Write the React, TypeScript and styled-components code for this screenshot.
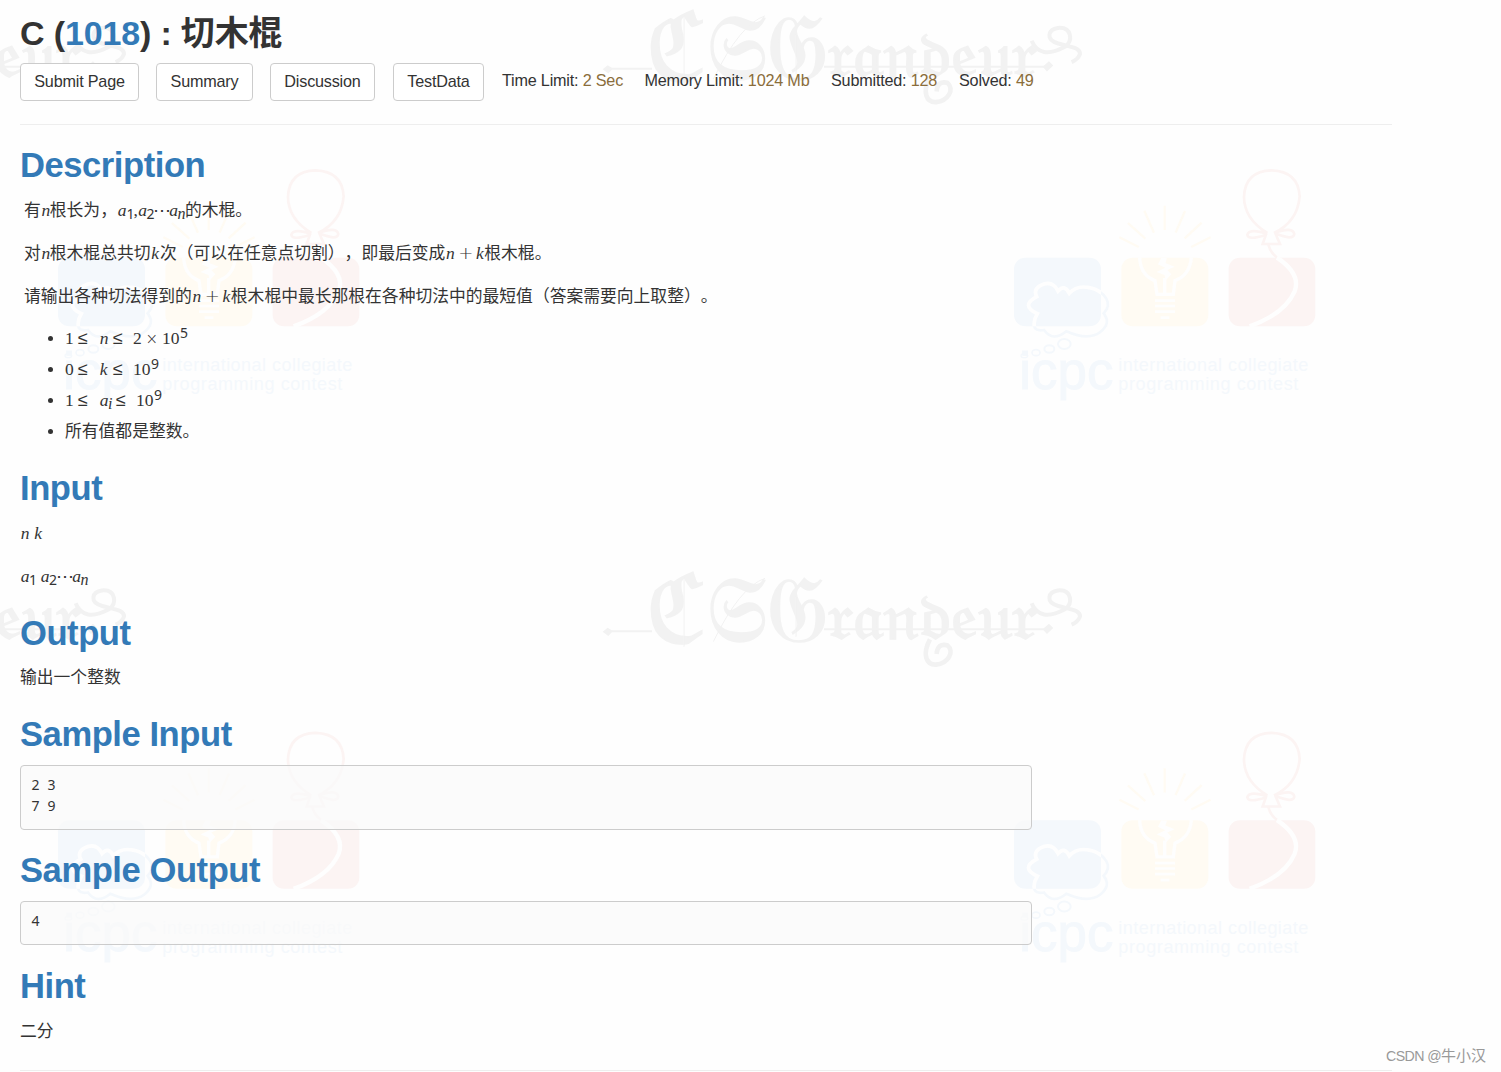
import { ReactNode } from "react";
import styled, { createGlobalStyle } from "styled-components";

const GlobalStyle = createGlobalStyle`
  * {
    box-sizing: border-box;
  }
  body {
    margin: 0;
    background-color: #fefefe;
    color: #333;
    font-family: "Liberation Sans", "Noto Sans CJK SC", sans-serif;
    font-size: 16.8px;
    text-spacing-trim: space-all;
  }
`;

const Page = styled.div`
  position: relative;
  width: 1501px;
  height: 1072px;
  overflow: hidden;
`;

const Watermark = styled.svg`
  position: absolute;
  top: 0;
  left: 0;
  width: 1501px;
  height: 1072px;
`;

const Content = styled.main`
  position: relative;
  width: 1392px;
  padding: 13px 0 0 20px;
`;

const Title = styled.h1`
  margin: 0 0 10px;
  font-size: 34px;
  line-height: 40px;
  font-weight: bold;
  letter-spacing: -0.15px;
`;

const ProblemLink = styled.a`
  color: #337ab7;
`;

const Toolbar = styled.div`
  display: flex;
  height: 38px;
`;

const ToolButton = styled.button<{ $width: number; $gap: number }>`
  width: ${(props) => props.$width}px;
  margin: 0 ${(props) => props.$gap}px 0 0;
  padding: 0 0 2px;
  border: 1px solid #ccc;
  border-radius: 4px;
  background-color: #fff;
  color: #333;
  font-family: "Liberation Sans", sans-serif;
  font-size: 16.2px;
  letter-spacing: -0.2px;
  white-space: nowrap;
`;

const Stat = styled.span<{ $width: number }>`
  width: ${(props) => props.$width}px;
  font-size: 16.2px;
  letter-spacing: -0.2px;
  line-height: 35px;
  white-space: nowrap;
`;

const StatValue = styled.span`
  color: #8a6d3b;
`;

const Divider = styled.hr<{ $top?: number }>`
  margin: ${(props) => props.$top ?? 23}px 0 19px;
  border: 0;
  border-top: 1px solid #eee;
`;

const Heading = styled.h2`
  margin: 0 0 13.5px;
  padding-top: 1px;
  color: #337ab7;
  font-size: 34.6px;
  line-height: 40px;
  font-weight: bold;
  letter-spacing: -0.45px;
`;

const Section = styled.section<{ $after?: number }>`
  margin-bottom: ${(props) => props.$after ?? 24}px;
`;

const Paragraph = styled.p<{ $indent?: number }>`
  margin: 0 0 19px;
  padding-left: ${(props) => props.$indent ?? 0}px;
  height: 24px;
  line-height: 24px;
  white-space: nowrap;
  &:last-child {
    margin-bottom: 0;
  }
`;

const List = styled.ul`
  margin: -5px 0 0;
  padding: 0 0 0 45px;
`;

const Item = styled.li`
  height: 31.2px;
  line-height: 31.2px;
  white-space: nowrap;
`;

const Sample = styled.pre`
  width: 1012px;
  margin: -2.5px 0 0;
  padding: 8px 10.5px 13px;
  border: 1px solid #ccc;
  border-radius: 4px;
  background-color: rgba(249, 249, 249, 0.75);
  font-family: "Noto Sans", sans-serif;
  font-size: 14px;
  line-height: 21px;
  word-spacing: 4.4px;
`;

const Glyph = styled.span<{ $width: number; $italic?: boolean }>`
  display: inline-block;
  width: ${(props) => props.$width}px;
  padding-left: ${(props) => (props.$italic ? 0.7 : 0)}px;
  font-family: "Liberation Serif", serif;
  font-size: 17.5px;
  font-style: ${(props) => (props.$italic ? "italic" : "normal")};
  line-height: 20px;
`;

const Operator = styled.span<{ $width: number; $size?: number }>`
  display: inline-block;
  width: ${(props) => props.$width}px;
  font-family: "DejaVu Sans", sans-serif;
  font-size: ${(props) => props.$size ?? 18}px;
  font-weight: 200;
  line-height: 20px;
`;

const Script = styled.span<{
  $width: number;
  $shift: number;
  $italic?: boolean;
}>`
  display: inline-block;
  position: relative;
  top: ${(props) => props.$shift}px;
  width: ${(props) => props.$width}px;
  font-family: ${(props) =>
    props.$italic ? '"Liberation Serif", serif' : '"Noto Sans", sans-serif'};
  font-size: ${(props) => (props.$italic ? 16 : 14)}px;
  font-style: ${(props) => (props.$italic ? "italic" : "normal")};
  line-height: 16px;
`;

const Credit = styled.div`
  position: absolute;
  right: 15px;
  bottom: 6px;
  color: #999;
  font-size: 15px;
  line-height: 20px;
`;

const CreditSite = styled.span`
  font-size: 14.2px;
  letter-spacing: -0.6px;
`;

const TILE_WIDTH = 956;
const TILE_HEIGHT = 562.5;

const BLUE = "#f4f8fc";
const YELLOW = "#fffbf3";
const RED = "#fcf4f3";
const GRAY = "#f2f2f2";

const Var = ({ children, width = 9 }: { children: ReactNode; width?: number }) => (
  <Glyph $italic $width={width}>
    {children}
  </Glyph>
);

const Sum = () => (
  <>
    <Var width={13}>n</Var>
    <Operator $width={17}>+</Operator>
    <Var>k</Var>
  </>
);

const ContestLogo = () => (
  <g id="contest" transform="translate(1000 150) scale(0.3333)">
    <rect x="42" y="323" width="261" height="206" rx="34" fill={BLUE} />
    <rect x="364" y="323" width="261" height="206" rx="34" fill={YELLOW} />
    <rect x="686" y="323" width="260" height="206" rx="34" fill={RED} />
    <clipPath id="cloudBox">
      <rect x="42" y="323" width="261" height="206" rx="34" />
    </clipPath>
    <g fill="none" strokeWidth="8">
      <path
        stroke={BLUE}
        d="M104 533 Q98 513 112 491 Q60 467 110 440 Q99 419 122 406 Q157 389 174 423 Q193 401 208 430 Q230 405 268 413 Q302 419 319 446 Q332 468 311 490 Q335 520 300 547 Q265 573 199 544 Q159 577 132 540 Q111 544 104 533Z"
      />
      <path
        stroke="#fefefe"
        strokeWidth="11"
        clipPath="url(#cloudBox)"
        d="M104 533 Q98 513 112 491 Q60 467 110 440 Q99 419 122 406 Q157 389 174 423 Q193 401 208 430 Q230 405 268 413 Q302 419 319 446 Q332 468 311 490 Q335 520 300 547"
      />
      <g stroke={BLUE} strokeWidth="6">
        <ellipse cx="193" cy="582" rx="19" ry="15" />
        <ellipse cx="148" cy="597" rx="15" ry="11" />
        <ellipse cx="108" cy="608" rx="12" ry="9" strokeWidth="5" />
        <ellipse cx="73" cy="617" rx="10" ry="6" strokeWidth="4" />
      </g>
      <path
        stroke={YELLOW}
        strokeWidth="7"
        d="M358 262 L416 291 M384 219 L436 266 M433 182 L462 248 M494 167 V240 M555 183 L527 248 M605 218 L554 265 M632 262 L574 291"
      />
      <path
        stroke="#fefefe"
        strokeWidth="10"
        d="M419 323 Q421 375 465 392 L471 433 H520 L525 392 Q570 375 574 323 M494 434 V384"
      />
      <path
        stroke="#fefefe"
        strokeWidth="8"
        d="M465 452 H525 M465 468 H525 M465 485 H525 M482 503 H508"
      />
      <path
        fill="#fefefe"
        d="M484 323 L501 325 L496 339 L524 350 L502 360 L514 373 L498 390 L493 375 L470 366 L496 353 L474 343Z"
      />
      <path
        stroke={RED}
        d="M802 249 Q733 207 732 141 Q735 63 815 61 Q895 64 899 139 Q893 215 822 249 M802 251 Q748 234 742 254 Q744 272 797 255 M825 248 Q878 229 883 252 Q880 273 826 250 M799 251 L788 282 H840 L826 250 M805 283 Q811 308 831 322"
      />
      <path stroke="#fefefe" strokeWidth="13" d="M831 323 Q904 372 884 424 Q855 491 749 529" />
    </g>
    <g fill={BLUE} fontFamily='"Liberation Sans", sans-serif'>
      <text
        x="58"
        y="717"
        fontSize="154"
        textLength="282"
        lengthAdjust="spacingAndGlyphs"
        stroke={BLUE}
        strokeWidth="3"
      >
        icpc
      </text>
      <text x="355" y="664" fontSize="54" textLength="570">
        international collegiate
      </text>
      <text x="355" y="721" fontSize="54" textLength="540">
        programming contest
      </text>
    </g>
  </g>
);

const AuthorLogo = () => (
  <g id="author" transform="translate(590 560) scale(0.3333)" fill={GRAY}>
    <g
      fontFamily='"DejaVu Sans", "DejaVu Serif", "Liberation Serif", serif'
      stroke={GRAY}
      strokeWidth="5"
    >
      <text x="168" y="246" fontSize="282" textLength="548" lengthAdjust="spacingAndGlyphs">
        ℭ𝔖𝔊
      </text>
      <text x="715" y="238" fontSize="190" textLength="625" lengthAdjust="spacingAndGlyphs">
        𝔯𝔞𝔫𝔡𝔢𝔲𝔯
      </text>
    </g>
    <path d="M38 215 L53 203 L69 213 L55 228Z M1358 208 L1377 191 L1390 204 L1371 222Z" />
    <g fill="none" stroke={GRAY}>
      <path strokeWidth="6" d="M65 214 H186 M702 208 H1364" />
      <path strokeWidth="3" d="M282 60 V260 M370 245 Q450 80 525 55 M618 110 V230" />
      <path
        strokeWidth="12"
        d="M1325 130 Q1350 188 1425 148 C1450 130 1445 90 1408 91 C1372 95 1366 126 1405 138 C1440 148 1472 150 1470 170 Q1464 186 1445 194"
      />
      <path
        strokeWidth="14"
        d="M1020 238 C995 285 1010 315 1038 314 C1075 310 1095 275 1072 256 Q1043 248 1040 282"
      />
    </g>
  </g>
);

const stats = [
  { label: "Time Limit", value: "2 Sec", width: 142.5 },
  { label: "Memory Limit", value: "1024 Mb", width: 186.5 },
  { label: "Submitted", value: "128", width: 128 },
  { label: "Solved", value: "49", width: 80 },
];

const App = () => {
  return (
    <Page>
      <GlobalStyle />
      <Watermark viewBox="0 0 1501 1072" aria-hidden>
        <ContestLogo />
        <use href="#contest" x={-TILE_WIDTH} />
        <use href="#contest" y={TILE_HEIGHT} />
        <use href="#contest" x={-TILE_WIDTH} y={TILE_HEIGHT} />
        <AuthorLogo />
        <use href="#author" x={-TILE_WIDTH} />
        <use href="#author" y={-TILE_HEIGHT} />
        <use href="#author" x={-TILE_WIDTH} y={-TILE_HEIGHT} />
      </Watermark>
      <Content>
        <Title>
          C (<ProblemLink>1018</ProblemLink>) : 切木棍
        </Title>
        <Toolbar>
          <ToolButton $width={119} $gap={17}>
            Submit Page
          </ToolButton>
          <ToolButton $width={97} $gap={17}>
            Summary
          </ToolButton>
          <ToolButton $width={105} $gap={18}>
            Discussion
          </ToolButton>
          <ToolButton $width={91} $gap={18}>
            TestData
          </ToolButton>
          {stats.map((stat) => (
            <Stat key={stat.label} $width={stat.width}>
              {stat.label}: <StatValue>{stat.value}</StatValue>
            </Stat>
          ))}
        </Toolbar>
        <Divider />
        <Section $after={20}>
          <Heading>Description</Heading>
          <Paragraph $indent={4}>
            有<Var>n</Var>根长为，<Var width={9.5}>a</Var>
            <Script $width={7} $shift={3}>1</Script>
            <Glyph $width={4}>,</Glyph>
            <Var>a</Var>
            <Script $width={6.5} $shift={3}>2</Script>
            <Glyph $width={15.5}>⋯</Glyph>
            <Var>a</Var>
            <Script $italic $width={7.5} $shift={3}>n</Script>
            的木棍。
          </Paragraph>
          <Paragraph $indent={4}>
            对<Var>n</Var>根木棍总共切<Var width={9.5}>k</Var>
            次（可以在任意点切割），即最后变成
            <Sum />
            根木棍。
          </Paragraph>
          <Paragraph $indent={4}>
            请输出各种切法得到的
            <Sum />
            根木棍中最长那根在各种切法中的最短值（答案需要向上取整）。
          </Paragraph>
          <List>
            <Item>
              <Glyph $width={13}>1</Glyph>
              <Operator $width={21}>≤</Operator>
              <Var width={14}>n</Var>
              <Operator $width={20}>≤</Operator>
              <Glyph $width={12.5}>2</Glyph>
              <Operator $width={16.5} $size={15}>×</Operator>
              <Glyph $width={18}>10</Glyph>
              <Script $width={8} $shift={-6}>5</Script>
            </Item>
            <Item>
              <Glyph $width={13}>0</Glyph>
              <Operator $width={21}>≤</Operator>
              <Var width={14}>k</Var>
              <Operator $width={20}>≤</Operator>
              <Glyph $width={18}>10</Glyph>
              <Script $width={8} $shift={-6}>9</Script>
            </Item>
            <Item>
              <Glyph $width={13}>1</Glyph>
              <Operator $width={21}>≤</Operator>
              <Var>a</Var>
              <Script $italic $width={8} $shift={3}>i</Script>
              <Operator $width={20}>≤</Operator>
              <Glyph $width={18}>10</Glyph>
              <Script $width={8} $shift={-6}>9</Script>
            </Item>
            <Item>所有值都是整数。</Item>
          </List>
        </Section>
        <Section $after={23}>
          <Heading>Input</Heading>
          <Paragraph>
            <Var width={13.5}>n</Var>
            <Var>k</Var>
          </Paragraph>
          <Paragraph>
            <Var>a</Var>
            <Script $width={11} $shift={3}>1</Script>
            <Var>a</Var>
            <Script $width={7} $shift={3}>2</Script>
            <Glyph $width={15.5}>⋯</Glyph>
            <Var>a</Var>
            <Script $italic $width={8} $shift={3}>n</Script>
          </Paragraph>
        </Section>
        <Section $after={23}>
          <Heading>Output</Heading>
          <Paragraph>输出一个整数</Paragraph>
        </Section>
        <Section $after={19}>
          <Heading>Sample Input</Heading>
          <Sample>{"2 3\n7 9"}</Sample>
        </Section>
        <Section $after={20}>
          <Heading>Sample Output</Heading>
          <Sample>4</Sample>
        </Section>
        <Section>
          <Heading>Hint</Heading>
          <Paragraph>二分</Paragraph>
        </Section>
        <Divider $top={26} />
      </Content>
      <Credit>
        <CreditSite>CSDN @</CreditSite>牛小汉
      </Credit>
    </Page>
  );
};

export default App;
